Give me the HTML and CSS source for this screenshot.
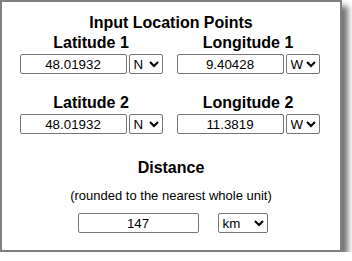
FILE: index.html
```html
<!DOCTYPE html>
<html lang="en">
<head>
  <meta charset="UTF-8">
  <title>Distance Calculator</title>
  <link rel="stylesheet" href="styles.css">
</head>
<body>
  <div class="panel">
    <h1 class="title">Input Location Points</h1>

    <div class="points">
      <div class="point">
        <h2 class="label">Latitude 1</h2>
        <div class="field">
          <input class="coord" type="text" value="48.01932">
          <select class="dir">
            <option>N</option>
            <option>S</option>
          </select>
        </div>
      </div>
      <div class="point">
        <h2 class="label">Longitude 1</h2>
        <div class="field">
          <input class="coord" type="text" value="9.40428">
          <select class="dir">
            <option>W</option>
            <option>E</option>
          </select>
        </div>
      </div>
      <div class="point">
        <h2 class="label">Latitude 2</h2>
        <div class="field">
          <input class="coord" type="text" value="48.01932">
          <select class="dir">
            <option>N</option>
            <option>S</option>
          </select>
        </div>
      </div>
      <div class="point">
        <h2 class="label">Longitude 2</h2>
        <div class="field">
          <input class="coord" type="text" value="11.3819">
          <select class="dir">
            <option>W</option>
            <option>E</option>
          </select>
        </div>
      </div>
    </div>

    <h2 class="label distance-title">Distance</h2>
    <p class="note">(rounded to the nearest whole unit)</p>
    <div class="result">
      <input class="distance" type="text" value="147" readonly>
      <select class="unit">
        <option>km</option>
        <option>mi</option>
      </select>
    </div>
  </div>
</body>
</html>
```

FILE: styles.css
```css
body {
  margin: 0;
  background: #fff;
  font-family: 'Liberation Sans', Arial, sans-serif;
  color: #000;
}

.panel {
  box-sizing: border-box;
  width: 342px;
  height: 252px;
  border: 2px solid #808080;
  background: #fff;
  box-shadow: 6px 6px 6px rgba(0, 0, 0, 0.55);
  padding-top: 12px;
  text-align: center;
}

.title,
.label {
  margin: 0;
  font-size: 16px;
  font-weight: bold;
  line-height: 18px;
}

.points {
  display: grid;
  grid-template-columns: 150px 150px;
  column-gap: 7px;
  row-gap: 20px;
  justify-content: center;
  margin-top: 2px;
  padding-right: 3px;
}

.field {
  display: flex;
  justify-content: center;
  gap: 2px;
  margin-top: 2px;
}

input,
select {
  box-sizing: border-box;
  height: 20px;
  margin: 0;
  font-family: 'Liberation Sans', Arial, sans-serif;
  font-size: 13.33px;
  color: #000;
  background: #fff;
  border: 1px solid #767676;
  border-radius: 2px;
}

input {
  padding: 1px 2px;
  text-align: center;
}

select {
  padding: 0;
}

.coord {
  width: 107px;
}

.dir {
  width: 34px;
}

.distance-title {
  margin-top: 25px;
}

.note {
  margin: 11px 0 0;
  font-size: 13px;
  line-height: 15px;
}

.result {
  display: flex;
  justify-content: center;
  gap: 19px;
  margin-top: 10px;
  padding-left: 3px;
}

.distance {
  width: 121px;
}

.unit {
  width: 50px;
}
```
